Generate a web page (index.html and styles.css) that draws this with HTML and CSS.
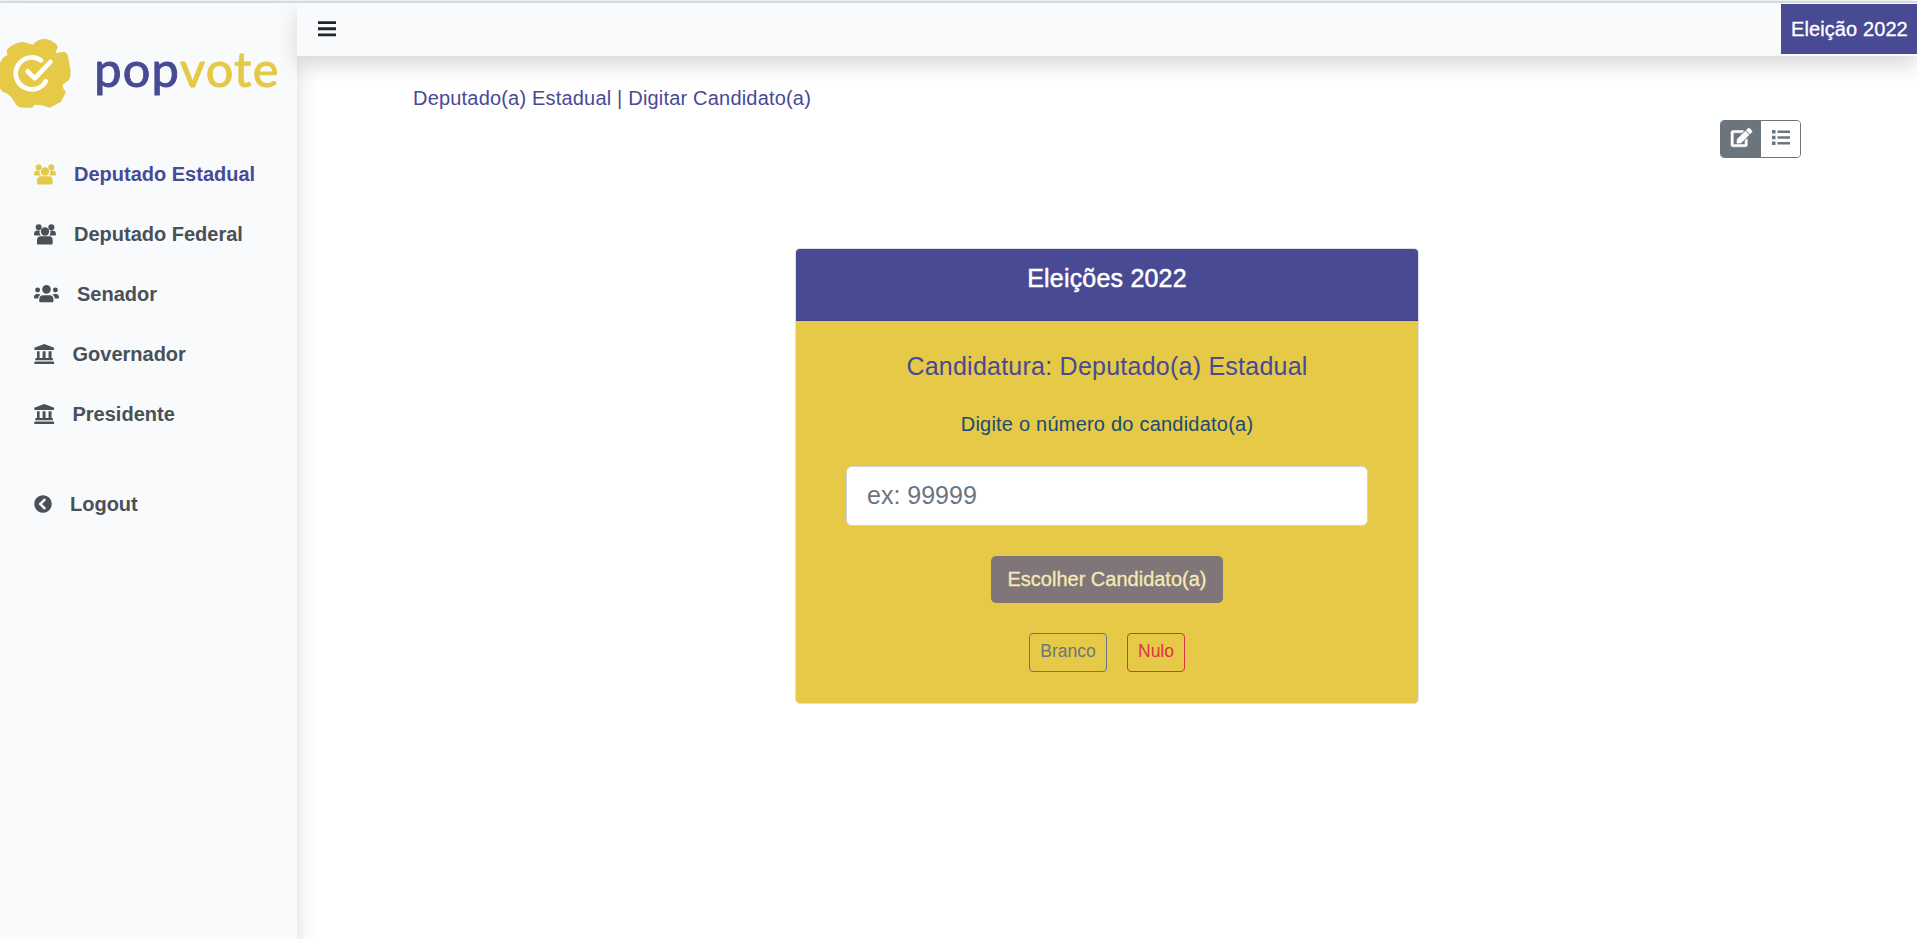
FILE: index.html
```html
<!DOCTYPE html>
<html lang="pt-BR">
<head>
<meta charset="utf-8">
<title>popvote</title>
<link rel="stylesheet" href="styles.css">
</head>
<body>
<svg class="defs" width="0" height="0">
  <symbol id="people" viewBox="0 0 66 62">
    <circle cx="14" cy="9" r="9"/><circle cx="52" cy="9" r="9"/>
    <path d="M10 19h7a17 17 0 0 0 3 15H4c-3 0-4-2-4-4 0-6 4-11 10-11zM56 19h-7a17 17 0 0 1-3 15h16c3 0 4-2 4-4 0-6-4-11-10-11z"/>
    <circle cx="33" cy="22" r="12.500"/>
    <path d="M20 36h26c6 0 10 5 10 11v10c0 3-2 4-4 4H13c-3 0-4-2-4-4V47c0-6 5-11 11-11z"/>
  </symbol>
  <symbol id="users" viewBox="0 0 76 54">
    <circle cx="38" cy="13" r="13"/><circle cx="11" cy="15" r="7.500"/><circle cx="65" cy="15" r="7.500"/>
    <path d="M28 31h20c7 0 11 5 11 12v5c0 3-2 4-4 4H20c-3 0-4-2-4-4v-5c0-7 5-12 12-12zM9 27h6l5 2c-5 3-7 7-8 12H3c-2 0-3-1-3-3 0-7 3-11 9-11zM67 27h-6l-5 2c5 3 7 7 8 12h9c2 0 3-1 3-3 0-7-3-11-9-11z"/>
  </symbol>
  <symbol id="landmark" viewBox="0 0 62 62">
    <path d="M31 0 61 11v5c0 1-1 2-2 2H3c-1 0-2-1-2-2v-5zM9 22h8v20h9V22h9v20h9V22h9v20h2c1 0 2 1 2 2v5H4v-5c0-1 1-2 2-2h3zM4 53h54c2 0 3 1 3 3v5H1v-5c0-2 1-3 3-3z"/>
  </symbol>
  <symbol id="back" viewBox="0 0 512 512">
    <path d="M256 504C119 504 8 393 8 256S119 8 256 8s248 111 248 248-111 248-248 248zM142.100 273l135.500 135.500c9.400 9.400 24.600 9.400 33.900 0l17-17c9.400-9.400 9.400-24.600 0-33.900L226.900 256l101.600-101.600c9.400-9.400 9.400-24.600 0-33.900l-17-17c-9.400-9.400-24.600-9.400-33.900 0L142.100 239c-9.400 9.400-9.400 24.600 0 34z"/>
  </symbol>
</svg>
<div class="topline"></div>
<div class="shell">
  <aside class="sidebar">
    <svg class="logo" viewBox="0 0 891 240" role="img" aria-label="popvote">
      <path fill="#e5c947" d="M0 86Q7 70 23 62 17 50 24 44 42 25 71 24L98 32Q112 16 132 15 151 15 165 28 175 36 172 42L166 58 190 53Q201 54 204 67L212 112Q212 132 206 139L188 152Q187 164 198 173L183 203 150 221Q125 211 103 212L97 221H70Q57 221 49 212L35 191Q24 178 8 174L0 163z"/>
      <path class="ring" d="M123 79A48 48 0 1 0 137 142M83 112 104 133 151 84"/>
      <g class="word"><text class="pop" x="283" y="158" textLength="253">pop</text><text class="vote" x="540" y="158" textLength="295">vote</text></g>
    </svg>
    <nav class="menu">
      <a class="item active"><svg width="22" height="21"><use href="#people"/></svg>Deputado Estadual</a>
      <a class="item"><svg width="22" height="21"><use href="#people"/></svg>Deputado Federal</a>
      <a class="item"><svg width="25" height="18"><use href="#users"/></svg>Senador</a>
      <a class="item"><svg width="20.500" height="20.500"><use href="#landmark"/></svg>Governador</a>
      <a class="item"><svg width="20.500" height="20.500"><use href="#landmark"/></svg>Presidente</a>
      <a class="item logout"><svg width="18" height="18"><use href="#back"/></svg>Logout</a>
    </nav>
  </aside>
  <div class="main">
    <header class="navbar">
      <svg class="bars" width="18" height="16" viewBox="0 0 18 16"><path d="M0 .300h18v2.700H0zM0 6.300h18v2.900H0zM0 12.500h18v2.700H0z"/></svg>
      <div class="badge">Eleição 2022</div>
    </header>
    <main class="content">
      <h1 class="title">Deputado(a) Estadual | Digitar Candidato(a)</h1>
      <div class="tools">
        <div class="group">
          <button class="tool on"><svg width="21" height="19" viewBox="0 0 576 512"><path stroke="#fff" stroke-width="14" d="M402.600 83.200l90.200 90.200c3.800 3.800 3.800 10 0 13.800L274.400 405.600l-92.800 10.300c-12.400 1.400-22.900-9.100-21.500-21.500l10.300-92.800L388.800 83.200c3.800-3.800 10-3.800 13.800 0zm162-22.900l-48.800-48.800c-15.200-15.200-39.900-15.200-55.200 0l-35.400 35.400c-3.800 3.800-3.800 10 0 13.800l90.200 90.200c3.800 3.800 10 3.800 13.800 0l35.400-35.400c15.200-15.300 15.200-40 0-55.200zM384 346.200V448H64V128h229.800c3.200 0 6.200-1.300 8.500-3.500l40-40c7.600-7.600 2.200-20.500-8.500-20.500H48C21.500 64 0 85.500 0 112v352c0 26.500 21.500 48 48 48h352c26.500 0 48-21.500 48-48V306.200c0-10.700-12.900-16-20.500-8.500l-40 40c-2.200 2.300-3.500 5.300-3.500 8.500z"/></svg></button>
          <button class="tool"><svg width="18" height="15" viewBox="0 0 18 15"><path d="M0 0h3.500v3.500H0zM0 5.700h3.500v3.500H0zM0 11.400h3.500v3.500H0zM5.500.400H18v2.600H5.500zM5.500 6.200H18v2.600H5.500zM5.500 11.900H18v2.600H5.500z"/></svg></button>
        </div>
      </div>
      <section class="card">
        <div class="card-head">Eleições 2022</div>
        <div class="card-body">
          <h2 class="race">Candidatura: Deputado(a) Estadual</h2>
          <label class="hint" for="num">Digite o número do candidato(a)</label>
          <input class="number" id="num" placeholder="ex: 99999">
          <button class="choose">Escolher Candidato(a)</button>
          <div class="others"><button class="small">Branco</button><button class="small null">Nulo</button></div>
        </div>
      </section>
    </main>
  </div>
</div>
</body>
</html>
```

FILE: styles.css
```css
* { box-sizing: border-box; }
body { margin: 0; height: 939px; overflow: hidden; background: #fff; font: 20px/30px "Liberation Sans", Arial, sans-serif; }
button, input { font-family: inherit; }
.defs { display: none; }
.topline { height: 3px; border-top: 1px solid #f4f5f6; background: #d9dddf; }
.shell { display: flex; height: 936px; }
.sidebar { width: 297px; flex: none; background: #f8fafc; box-shadow: 0 10px 20px rgba(0,0,0,.15); }
.logo { display: block; width: 297px; height: 80px; margin-top: 31px; }
.ring { fill: none; stroke: #fff; stroke-width: 14; stroke-linecap: round; stroke-linejoin: round; }
.word { font-family: Lato, sans-serif; font-size: 146px; font-weight: 400; stroke-width: 3; stroke-linejoin: round; }
.pop { fill: #484a93; stroke: #484a93; }
.vote { fill: #e5c947; stroke: #e5c947; }
.menu { display: flex; flex-direction: column; padding: 30px 0 0 34px; }
.item { display: flex; align-items: center; gap: 18px; height: 60px; color: #495057; font-weight: 700; white-space: nowrap; }
.item svg { fill: #495057; flex: none; }
.item.active { color: #484a93; }
.item.active svg { fill: #e5c947; }
.logout { margin-top: 30px; }
.main { flex: 1; min-width: 0; }
.navbar { position: relative; display: flex; align-items: center; justify-content: space-between; height: 53px; padding-left: 21px; background: #f8fafc; box-shadow: 0 10px 20px rgba(0,0,0,.15); }
.bars { fill: #212529; margin-bottom: 2px; }
.badge { width: 136px; height: 50px; margin-bottom: 1px; padding-left: 10px; line-height: 50px; letter-spacing: .1px; background: #484a93; color: #fff; white-space: nowrap; -webkit-text-stroke: .3px #fff; }
.content { display: flex; flex-direction: column; padding: 27px 116px 0; }
.title { margin: 0; font-size: 20px; line-height: 30px; font-weight: 400; letter-spacing: .19px; color: #484a93; }
.tools { display: flex; justify-content: flex-end; margin-top: 7px; }
.group { display: flex; height: 38px; border: 1px solid #6c757d; border-radius: 4px; overflow: hidden; }
.tool { display: flex; align-items: center; justify-content: center; width: 39px; padding: 0 0 3px; border: 0; background: #fff; }
.tool svg { fill: #6c757d; overflow: visible; }
.tool.on { width: 40px; background: #6c757d; }
.tool.on svg { fill: #fff; }
.card { align-self: center; width: 624px; height: 456px; margin-top: 90px; border: 1px solid #dfdfdf; border-radius: 5px; overflow: hidden; background: #e5c947; }
.card-head { height: 72px; padding-top: 14px; border-bottom: 1px solid #3f4180; background: #484a93; color: #fff; font-size: 25px; letter-spacing: .2px; text-align: center; -webkit-text-stroke: .5px #fff; }
.card-body { display: flex; flex-direction: column; align-items: center; padding: 30px 50px 0; }
.race { margin: 0; font-size: 25px; line-height: 30px; font-weight: 400; letter-spacing: .24px; color: #484a93; }
.hint { margin-top: 28px; letter-spacing: .22px; color: #1b4b72; }
.number { width: 522px; height: 60px; margin-top: 27px; padding: 0 20px 2px; border: 1px solid #ced4da; border-radius: 6px; font-size: 25px; }
.number::placeholder { color: #6c757d; }
.choose { height: 47px; width: 232px; margin-top: 30px; padding: 0; border: 0; border-radius: 5px; background: #807679; color: #f5e9b5; font-size: 20px; white-space: nowrap; -webkit-text-stroke: .3px #f5e9b5; }
.others { display: flex; gap: 20px; margin-top: 30px; }
.small { width: 78px; height: 39px; padding: 0 0 2px; border: 1px solid #6c757d; border-radius: 4px; background: none; color: #6c757d; font-size: 17.500px; }
.null { width: 58px; border-color: #dc3545; color: #dc3545; }
```
